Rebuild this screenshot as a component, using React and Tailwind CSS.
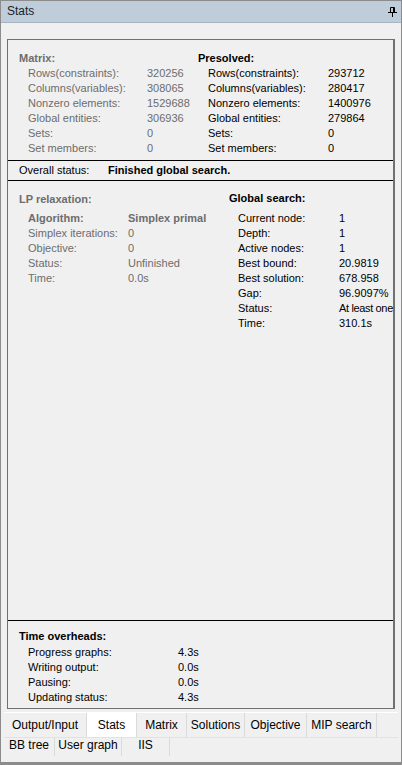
import React from "react";

const matrix = [
  ["Rows(constraints):", "320256"],
  ["Columns(variables):", "308065"],
  ["Nonzero elements:", "1529688"],
  ["Global entities:", "306936"],
  ["Sets:", "0"],
  ["Set members:", "0"],
];

const presolved = [
  ["Rows(constraints):", "293712"],
  ["Columns(variables):", "280417"],
  ["Nonzero elements:", "1400976"],
  ["Global entities:", "279864"],
  ["Sets:", "0"],
  ["Set members:", "0"],
];

const lp = [
  ["Simplex iterations:", "0"],
  ["Objective:", "0"],
  ["Status:", "Unfinished"],
  ["Time:", "0.0s"],
];

const globalSearch = [
  ["Current node:", "1"],
  ["Depth:", "1"],
  ["Active nodes:", "1"],
  ["Best bound:", "20.9819"],
  ["Best solution:", "678.958"],
  ["Gap:", "96.9097%"],
  ["Status:", "At least one"],
  ["Time:", "310.1s"],
];

const overheads = [
  ["Progress graphs:", "4.3s"],
  ["Writing output:", "0.0s"],
  ["Pausing:", "0.0s"],
  ["Updating status:", "4.3s"],
];

const tabsTop = [
  ["Output/Input", "w-[83px]"],
  ["Stats", "w-[50px]"],
  ["Matrix", "w-[50px]"],
  ["Solutions", "w-[58px]"],
  ["Objective", "w-[62px]"],
  ["MIP search", "w-[70px]"],
];

const tabsBottom = [
  ["BB tree", "w-[51px]"],
  ["User graph", "w-[67px]"],
  ["IIS", "w-[48px]"],
];

// one label/value line of a stats block
function Row({ label, value, labelW, gray }) {
  const tight = value.length > 10;
  return (
    <div className={"flex whitespace-nowrap " + (gray ? "text-[#6d6d6d]" : "text-black")}>
      <span className={labelW + " shrink-0"}>{label}</span>
      <span className={tight ? "tracking-[-0.35px]" : ""}>{value}</span>
    </div>
  );
}

function PinIcon() {
  return (
    <svg width="9" height="10" viewBox="0 0 9 10" className="block">
      <path d="M2.5 0.5h4v5h-4z" fill="none" stroke="#000" />
      <path d="M5 0.5h1.5v5H5z" fill="#000" />
      <path d="M0 5.5h9M4.5 5.5v4.5" stroke="#000" />
    </svg>
  );
}

export default function App() {
  return (
    <div
      className="w-[402px] h-[765px] flex flex-col bg-[#f0f0f0] border border-[#8c8c8c] border-b-[3px] overflow-hidden text-[11px] leading-[15px]"
      style={{ fontFamily: '"Liberation Sans", Arial, sans-serif' }}
    >
      {/* title bar */}
      <div className="h-[22px] shrink-0 flex items-center justify-between bg-[#bfcddb] pl-[6px] pr-[4px] border-b border-[#a8b4c0]">
        <span className="text-[12px] text-[#1e1e1e]">Stats</span>
        <PinIcon />
      </div>

      <div className="flex-1 flex flex-col px-[6px] pt-[16px]">
        <div className="flex-1 flex flex-col border border-[#707070] border-r-2 overflow-hidden">
          {/* matrix / presolved */}
          <div className="h-[120px] shrink-0 flex pt-[11px]">
            <div className="w-[190px] shrink-0 pl-[11px]">
              <div className="font-bold text-[#6d6d6d]">Matrix:</div>
              <div className="pl-[9px]">
                {matrix.map(([l, v]) => (
                  <Row key={l} label={l} value={v} labelW="w-[119px]" gray />
                ))}
              </div>
            </div>
            <div>
              <div className="font-bold">Presolved:</div>
              <div className="pl-[10px]">
                {presolved.map(([l, v]) => (
                  <Row key={l} label={l} value={v} labelW="w-[120px]" />
                ))}
              </div>
            </div>
          </div>

          {/* overall status */}
          <div className="h-[21px] shrink-0 flex items-center pl-[11px] border-y border-black">
            <span className="w-[89px]">Overall status:</span>
            <span className="font-bold">Finished global search.</span>
          </div>

          {/* lp relaxation / global search */}
          <div className="flex-1 flex pt-[11px]">
            <div className="w-[221px] shrink-0 pl-[11px] text-[#6d6d6d]">
              <div className="font-bold">LP relaxation:</div>
              <div className="pl-[9px] pt-[4px]">
                <div className="flex font-bold whitespace-nowrap">
                  <span className="w-[100px]">Algorithm:</span>
                  <span>Simplex primal</span>
                </div>
                {lp.map(([l, v]) => (
                  <Row key={l} label={l} value={v} labelW="w-[100px]" gray />
                ))}
              </div>
            </div>
            <div className="-mt-[1px]">
              <div className="font-bold">Global search:</div>
              <div className="pl-[9px] pt-[5px]">
                {globalSearch.map(([l, v]) => (
                  <Row key={l} label={l} value={v} labelW="w-[101px]" />
                ))}
              </div>
            </div>
          </div>

          {/* time overheads */}
          <div className="h-[88px] shrink-0 border-t border-black pl-[11px] pt-[8px]">
            <div className="font-bold">Time overheads:</div>
            <div className="pl-[9px] pt-[1px]">
              {overheads.map(([l, v]) => (
                <Row key={l} label={l} value={v} labelW="w-[150px]" />
              ))}
            </div>
          </div>
        </div>

        {/* tabs */}
        <div className="shrink-0 h-[50px] mt-[3px] -mx-[3px] border-t border-white text-[12px] text-black">
          <div className="flex h-[24px]">
            {tabsTop.map(([t, w]) => (
              <div
                key={t}
                className={
                  w +
                  " flex items-center justify-center border-r border-[#dadada] " +
                  (t === "Stats" ? "bg-white" : "")
                }
              >
                {t}
              </div>
            ))}
          </div>
          <div className="flex h-[19px] border-t border-[#e2e2e2]">
            {tabsBottom.map(([t, w]) => (
              <div key={t} className={w + " flex items-center justify-center pb-[3px] border-r border-[#dadada]"}>
                {t}
              </div>
            ))}
          </div>
        </div>
      </div>
    </div>
  );
}
